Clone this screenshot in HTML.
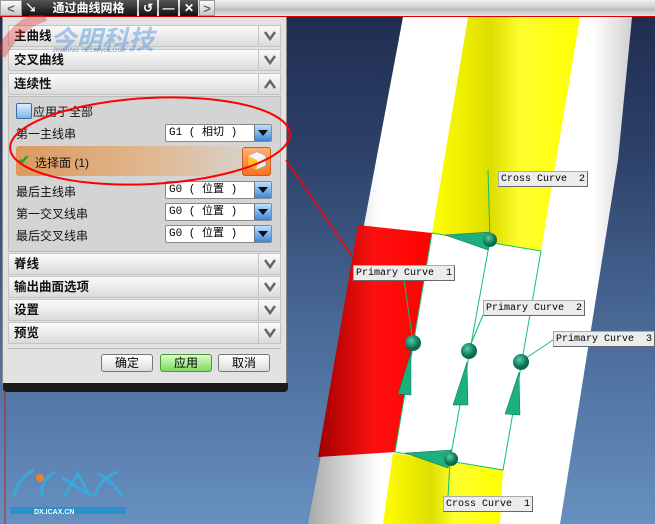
<!DOCTYPE html>
<html><head><meta charset="utf-8">
<style>
*{margin:0;padding:0;box-sizing:border-box}
body{width:655px;height:524px;overflow:hidden;position:relative;font-family:"Liberation Sans","Noto Sans CJK SC",sans-serif;font-size:12px;background:linear-gradient(#1f2b4e 0px,#2c4068 150px,#4a6a98 330px,#6690c0 524px)}
.a{position:absolute}
.top{left:0;top:0;width:655px;height:17px;background:linear-gradient(#f0f0f0,#d4d4d4 40%,#bcbcbc 60%,#e8e8e8);border-bottom:1px solid #d00}
.tb{top:0;height:16px;background:linear-gradient(#555,#111);color:#fff;text-align:center;font-weight:bold;line-height:16px;font-size:12px}
.lb{top:0;height:16px;background:linear-gradient(#fafafa,#c8c8c8);color:#666;text-align:center;line-height:15px;font-size:13px;font-weight:bold;border:1px solid #999}
.dlg{left:2px;top:17px;width:285px;height:368px;background:#e2e2e2;border:1px solid #888;border-top:none}
.shadow{left:3px;top:383px;width:285px;height:9px;background:#1a1a1a;border-radius:0 0 4px 4px}
.hd{left:8px;width:273px;height:22px;background:linear-gradient(#fafafa,#ececec 50%,#dadada);border:1px solid #c4c4c4;font-weight:bold;font-size:12.5px;line-height:21px;padding-left:5px;color:#111}
.hd .ar{position:absolute;right:0;top:0;width:22px;height:20px;border-left:1px solid #c4c4c4}
.hd .ar svg{position:absolute;left:5px;top:5px}
.body{left:8px;top:96px;width:273px;height:156px;background:#d4d4d4;border:1px solid #bbb}
.lab{font-size:12px;color:#111}
.sel{left:165px;width:107px;height:18px;background:#fff;border:1px solid #888;border-radius:2px;font-size:11px;line-height:16px;padding-left:3px;font-family:"Liberation Mono","Noto Sans CJK SC",monospace}
.sel .dd{position:absolute;right:0;top:0;width:17px;height:16px;background:linear-gradient(#bfe0ff,#3a86d8);border-left:1px solid #678}
.sel .dd:after{content:"";position:absolute;left:3px;top:5px;border-left:5px solid transparent;border-right:5px solid transparent;border-top:6px solid #111}
.btn{top:354px;width:52px;height:18px;border:1px solid #777;border-radius:3px;background:linear-gradient(#fff,#ddd);text-align:center;line-height:16px;font-size:12px}
.lbl{background:#ececec;border:1px solid #aaa;border-right-color:#666;border-bottom-color:#666;font-family:"Liberation Mono",monospace;font-size:10px;height:16px;line-height:15px;padding:0 2px;white-space:pre;color:#000}
</style></head><body>

<svg class="a" style="left:0;top:0" width="655" height="524">
<defs>
<linearGradient id="wh" x1="0" x2="1"><stop offset="0" stop-color="#a8a8a8"/><stop offset=".22" stop-color="#fff"/><stop offset=".88" stop-color="#fff"/><stop offset="1" stop-color="#d0d0d0"/></linearGradient>
<linearGradient id="yl" x1="0" x2="1"><stop offset="0" stop-color="#ffff00"/><stop offset=".4" stop-color="#dede00"/><stop offset=".6" stop-color="#ffff30"/><stop offset="1" stop-color="#ffff00"/></linearGradient>
<linearGradient id="rd" x1="0" x2="1"><stop offset="0" stop-color="#a00000"/><stop offset=".5" stop-color="#ff1010"/><stop offset="1" stop-color="#ff0000"/></linearGradient>
<radialGradient id="sp" cx=".4" cy=".35"><stop offset="0" stop-color="#4fd0a8"/><stop offset="1" stop-color="#0a6a4e"/></radialGradient>
</defs>
<polygon points="403,17 632,17 618,160 560,524 308,524" fill="url(#wh)"/>
<polygon points="468,17 580,17 541,251 432,233" fill="url(#yl)"/>
<polygon points="393,453 503,470 500,524 383,524" fill="url(#yl)"/>
<polygon points="358,225 432,233 395,452 318,457" fill="url(#rd)"/>
<g stroke="#10c070" stroke-width="1" fill="none">
<polygon points="432,233 541,251 503,470 395,452"/>
<line x1="490" y1="240" x2="450" y2="460"/>
<line x1="488" y1="170" x2="490" y2="240"/>
<line x1="404" y1="280" x2="413" y2="343"/>
<line x1="483" y1="315" x2="468" y2="351"/>
<line x1="553" y1="340" x2="520" y2="362"/>
<line x1="450" y1="460" x2="448" y2="497"/>
</g>
<g fill="#1cb080" stroke="#0a7050" stroke-width=".5">
<polygon points="445,235 490,232 488,250"/>
<polygon points="405,453 452,450 448,468"/>
<polygon points="411,352 398,394 411,395"/>
<polygon points="467,362 453,405 468,405"/>
<polygon points="519,372 505,414 520,415"/>
</g>
<g fill="url(#sp)">
<circle cx="490" cy="240" r="7"/><circle cx="451" cy="459" r="7"/>
<circle cx="413" cy="343" r="8"/><circle cx="469" cy="351" r="8"/><circle cx="521" cy="362" r="8"/>
</g>
<line x1="5" y1="392" x2="5" y2="524" stroke="#b22" stroke-width="1"/>
<g stroke="#3aa8d8" stroke-width="3" fill="none">
<path d="M14,496 Q18,478 34,470"/>
<path d="M42,496 Q40,480 55,472"/>
<path d="M64,496 L78,474 L90,496 M62,478 L92,496"/>
<path d="M95,496 Q100,478 118,472 M98,474 Q112,480 122,496"/>
</g>
<circle cx="40" cy="478" r="4" fill="#f08030"/>
<rect x="10" y="507" width="116" height="7" fill="#2a90c8"/>
<text x="34" y="514" font-size="7" font-weight="bold" fill="#fff" font-family="Liberation Sans">DX.ICAX.CN</text>
</svg>

<div class="a top"></div>
<div class="a lb" style="left:0;width:22px">&lt;</div>
<div class="a tb" style="left:22px;width:18px">↘</div>
<div class="a tb" style="left:40px;width:97px;font-family:'Noto Sans CJK SC',sans-serif">通过曲线网格</div>
<div class="a tb" style="left:139px;width:18px">↺</div>
<div class="a tb" style="left:159px;width:19px">—</div>
<div class="a tb" style="left:180px;width:18px">✕</div>
<div class="a lb" style="left:199px;width:16px">&gt;</div>

<div class="a dlg"></div>
<div class="a hd" style="top:25px">主曲线<span class="ar"><svg width="12" height="10"><path d="M1,1 L6,8 L11,1" stroke="#666" stroke-width="2.5" fill="none"/></svg></span></div>
<div class="a hd" style="top:49px">交叉曲线<span class="ar"><svg width="12" height="10"><path d="M1,1 L6,8 L11,1" stroke="#666" stroke-width="2.5" fill="none"/></svg></span></div>
<div class="a hd" style="top:73px">连续性<span class="ar"><svg width="12" height="10"><path d="M1,9 L6,2 L11,9" stroke="#666" stroke-width="2.5" fill="none"/></svg></span></div>
<div class="a body"></div>
<div class="a" style="left:16px;top:103px;width:16px;height:16px;border:1px solid #3a6ea8;border-radius:2px;background:linear-gradient(#e0f0ff,#7ab4e8)"></div>
<div class="a lab" style="left:33px;top:103px">应用于全部</div>
<div class="a lab" style="left:16px;top:125px">第一主线串</div>
<div class="a sel" style="top:124px">G1 ( 相切 )<span class="dd"></span></div>
<div class="a" style="left:16px;top:146px;width:226px;height:30px;border-radius:3px;background:linear-gradient(90deg,#dc9a60,#e0b890 60%,#d8d0c8)"></div>
<div class="a" style="left:18px;top:152px;color:#2a2;font-weight:bold;font-size:14px">✔</div>
<div class="a lab" style="left:35px;top:154px">选择面 (1)</div>
<div class="a" style="left:242px;top:147px;width:29px;height:29px;border:1px solid #c06020;border-radius:3px;background:linear-gradient(#ffb070,#ff7020)"></div>
<svg class="a" style="left:246px;top:150px" width="22" height="22"><polygon points="11,2 20,6 20,16 11,20 2,16 2,6" fill="#eee" stroke="#999"/><polygon points="2,6 11,10 11,20 2,16" fill="#ffc020"/><polygon points="2,6 11,2 20,6 11,10" fill="#f4f0ff"/></svg>
<div class="a lab" style="left:16px;top:183px">最后主线串</div>
<div class="a sel" style="top:181px">G0 ( 位置 )<span class="dd"></span></div>
<div class="a lab" style="left:16px;top:205px">第一交叉线串</div>
<div class="a sel" style="top:203px">G0 ( 位置 )<span class="dd"></span></div>
<div class="a lab" style="left:16px;top:227px">最后交叉线串</div>
<div class="a sel" style="top:225px">G0 ( 位置 )<span class="dd"></span></div>
<div class="a hd" style="top:253px">脊线<span class="ar"><svg width="12" height="10"><path d="M1,1 L6,8 L11,1" stroke="#666" stroke-width="2.5" fill="none"/></svg></span></div>
<div class="a hd" style="top:276px">输出曲面选项<span class="ar"><svg width="12" height="10"><path d="M1,1 L6,8 L11,1" stroke="#666" stroke-width="2.5" fill="none"/></svg></span></div>
<div class="a hd" style="top:299px">设置<span class="ar"><svg width="12" height="10"><path d="M1,1 L6,8 L11,1" stroke="#666" stroke-width="2.5" fill="none"/></svg></span></div>
<div class="a hd" style="top:322px">预览<span class="ar"><svg width="12" height="10"><path d="M1,1 L6,8 L11,1" stroke="#666" stroke-width="2.5" fill="none"/></svg></span></div>
<div class="a" style="left:8px;top:348px;width:273px;height:1px;background:#bbb"></div>
<div class="a btn" style="left:101px">确定</div>
<div class="a btn" style="left:160px;background:linear-gradient(#d8ffc8,#80d860);border-color:#4a9a3a">应用</div>
<div class="a btn" style="left:218px">取消</div>
<div class="a shadow"></div>

<div class="a" style="left:50px;top:20px;font-size:26px;font-weight:bold;font-style:italic;color:rgba(100,160,220,.55);font-family:'Noto Sans CJK SC',sans-serif">今明科技</div>
<div class="a" style="left:52px;top:47px;font-size:6.5px;font-weight:bold;font-style:italic;color:rgba(120,140,170,.6)">JINMING TECHNOLOGY</div>
<svg class="a" style="left:0;top:15px" width="60" height="45"><path d="M0,40 Q15,10 45,0" stroke="rgba(220,40,40,.35)" stroke-width="12" fill="none"/></svg>

<svg class="a" style="left:0;top:0" width="655" height="524">
<ellipse cx="150" cy="141" rx="140" ry="43" fill="none" stroke="#f00" stroke-width="2" transform="rotate(-3 150 141)"/>
<line x1="286" y1="160" x2="352" y2="256" stroke="#f00" stroke-width="1.5"/>
</svg>

<div class="a lbl" style="left:498px;top:171px">Cross Curve  2</div>
<div class="a lbl" style="left:353px;top:265px">Primary Curve  1</div>
<div class="a lbl" style="left:483px;top:300px">Primary Curve  2</div>
<div class="a lbl" style="left:553px;top:331px">Primary Curve  3</div>
<div class="a lbl" style="left:443px;top:496px">Cross Curve  1</div>
</body></html>
